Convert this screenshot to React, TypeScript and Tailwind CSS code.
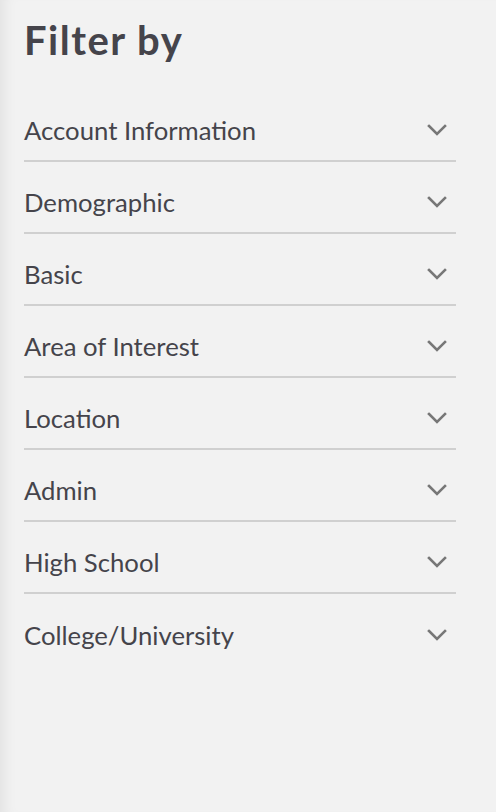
const sections = [
  "Account Information",
  "Demographic",
  "Basic",
  "Area of Interest",
  "Location",
  "Admin",
  "High School",
  "College/University",
];

const Chevron = () => (
  <svg width="20" height="12" viewBox="0 0 20 12" fill="none" className="shrink-0">
    <path d="M2 2l8 8 8-8" stroke="#777777" strokeWidth="2.6" strokeLinecap="square" />
  </svg>
);

export default function App() {
  return (
    <div
      className="min-h-[812px] w-full bg-[#f2f2f2] pl-6 pr-10 pt-4 shadow-[inset_14px_0_14px_-10px_rgba(0,0,0,0.07)]"
      style={{ fontFamily: "Lato, 'Open Sans', sans-serif" }}
    >
      <h2 className="text-[40px] font-bold leading-[48px] tracking-[1.5px] text-[#45444b]">
        Filter by
      </h2>
      <div className="mt-[26px] flex flex-col">
        {sections.map((s, i) => (
          <button
            key={s}
            className={`flex h-[72px] w-full items-center justify-between pt-[10px] pr-[9px] text-left ${
              i < sections.length - 1 ? "border-b-2 border-[#d0d0d0]" : ""
            }`}
          >
            <span className="text-[25.7px] leading-8 text-[#45444b]">{s}</span>
            <Chevron />
          </button>
        ))}
      </div>
    </div>
  );
}
